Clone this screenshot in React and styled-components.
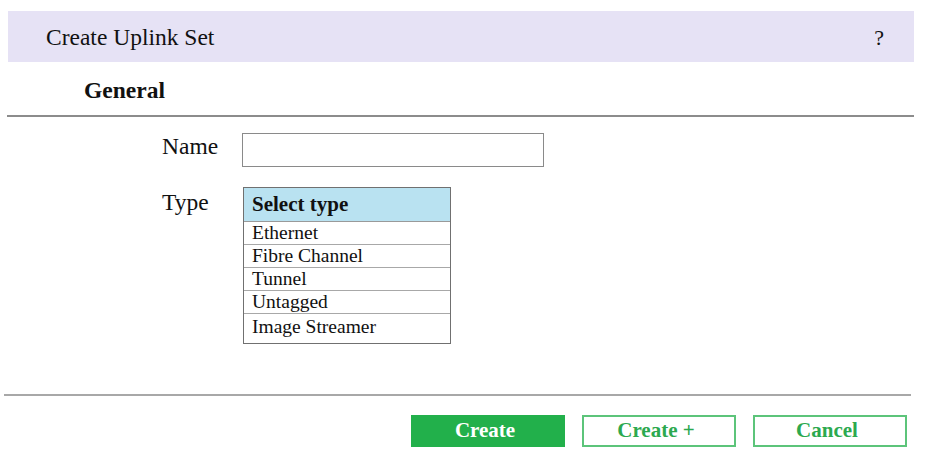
import styled, { createGlobalStyle } from "styled-components";

const GlobalStyle = createGlobalStyle`
  html, body {
    margin: 0;
    padding: 0;
    background: #fff;
  }
  body {
    font-family: "Liberation Serif", "Times New Roman", serif;
    color: #111;
  }
`

const Dialog = styled.div`
  width: 936px;
  height: 469px;
  display: flex;
  flex-direction: column;
  padding-top: 11px;
  box-sizing: border-box;
`

const TitleBar = styled.div`
  margin: 0 22px 0 8px;
  height: 51px;
  flex-shrink: 0;
  background: #e6e2f5;
  display: flex;
  align-items: center;
  justify-content: space-between;
  padding: 2px 30px 0 38px;
  box-sizing: border-box;
  font-size: 23.5px;
`

const Help = styled.span`
  font-size: 22px;
`

const SectionTitle = styled.div`
  height: 53px;
  flex-shrink: 0;
  display: flex;
  align-items: center;
  padding: 4px 0 0 84px;
  box-sizing: border-box;
  font-size: 23.5px;
  font-weight: 700;
`

const Divider = styled.hr`
  margin: 0 ${p => p.$right}px 0 ${p => p.$left}px;
  border: none;
  flex-shrink: 0;
  height: ${p => p.$thick}px;
  background: ${p => p.$color};
`

const Form = styled.div`
  display: flex;
  flex-direction: column;
  gap: 20px;
  padding: 16px 0 0 162px;
  height: 277px;
  flex-shrink: 0;
  box-sizing: border-box;
`

const Row = styled.div`
  display: flex;
  align-items: flex-start;
`

const Label = styled.div`
  width: 80px;
  font-size: 23.5px;
  line-height: 1;
  padding-top: ${p => p.$top}px;
`

const TextInput = styled.input`
  width: 302px;
  height: 34px;
  box-sizing: border-box;
  border: 1px solid #8a8a8a;
  outline: none;
  font-family: inherit;
  font-size: 18px;
  padding: 0 6px;
`

const TypeList = styled.div`
  width: 208px;
  margin-left: 1px;
  border: 1px solid #707070;
  box-sizing: border-box;
  display: flex;
  flex-direction: column;
`

const ListHead = styled.div`
  height: 33px;
  background: #b9e2f1;
  border-bottom: 1px solid #9a9a9a;
  display: flex;
  align-items: center;
  padding-left: 8px;
  font-size: 21px;
  font-weight: 700;
`

const ListItem = styled.div`
  display: flex;
  align-items: center;
  padding-left: 8px;
  font-size: 19.5px;
  line-height: 1;
  border-bottom: ${p => (p.$last ? "none" : "1px solid #a8a8a8")};
  height: ${p => (p.$last ? 26 : 22)}px;
  padding-bottom: ${p => (p.$last ? 3 : 0)}px;
  box-sizing: content-box;
`

const Footer = styled.div`
  display: flex;
  justify-content: flex-end;
  gap: 17px;
  padding: 19px 29px 0 0;
`

const Button = styled.button`
  width: 154px;
  height: 32px;
  box-sizing: border-box;
  font-family: inherit;
  font-size: 21px;
  font-weight: 700;
  cursor: pointer;
  border: 2px solid ${p => (p.$primary ? "#22b04b" : "#5cc47a")};
  background: ${p => (p.$primary ? "#22b04b" : "#fff")};
  color: ${p => (p.$primary ? "#fff" : "#2ca94f")};
  padding: 0 6px 2px 0;
`

const types = ["Ethernet", "Fibre Channel", "Tunnel", "Untagged", "Image Streamer"];

export default function App() {
    return (
        <>
            <GlobalStyle/>
            <Dialog>
                <TitleBar>
                    <span>Create Uplink Set</span>
                    <Help>?</Help>
                </TitleBar>
                <SectionTitle>General</SectionTitle>
                <Divider $left={7} $right={22} $thick={2} $color="#8c8c8c"/>
                <Form>
                    <Row>
                        <Label $top={2}>Name</Label>
                        <TextInput type="text"/>
                    </Row>
                    <Row>
                        <Label $top={4}>Type</Label>
                        <TypeList>
                            <ListHead>Select type</ListHead>
                            {types.map((t, i) => (
                                <ListItem key={t} $last={i === types.length - 1}>{t}</ListItem>
                            ))}
                        </TypeList>
                    </Row>
                </Form>
                <Divider $left={4} $right={25} $thick={2} $color="#a8a8a8"/>
                <Footer>
                    <Button $primary>Create</Button>
                    <Button>Create +</Button>
                    <Button>Cancel</Button>
                </Footer>
            </Dialog>
        </>
    )
}
